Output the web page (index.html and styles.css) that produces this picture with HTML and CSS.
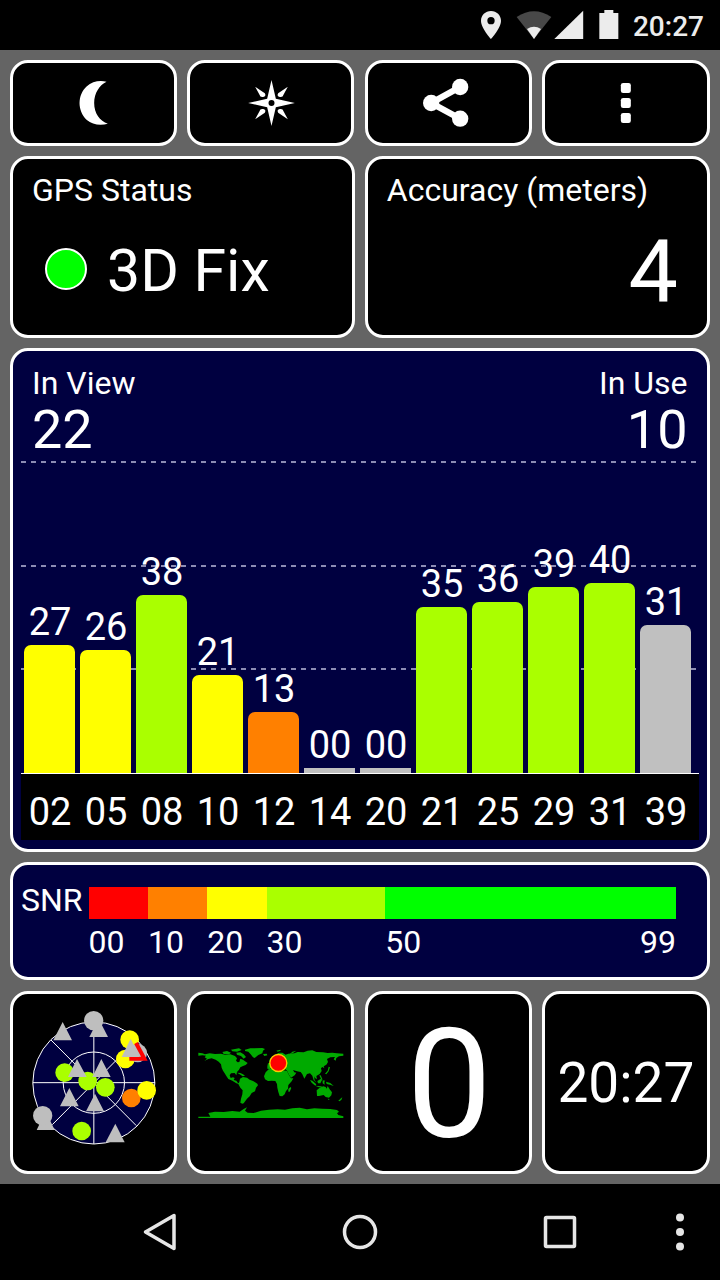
FILE: index.html
```
<!DOCTYPE html>
<html lang="en">
<head>
  <meta charset="UTF-8" />
  <meta name="viewport" content="width=device-width, initial-scale=1.0" />
  <title>GPS Test</title>
  <link rel="stylesheet" href="styles.css">
</head>
<body>
  <header class="status-bar">
    <svg class="status-pin" width="22" height="30" viewBox="60 30 66 90" aria-hidden="true">
      <path fill-rule="evenodd" d="M93 33c-17 0-30 13-30 29 0 22 30 55 30 55s30-33 30-55c0-16-13-29-30-29zm0 18a11 11 0 1 1 0 22 11 11 0 0 1 0-22z"/>
    </svg>
    <svg class="status-wifi" width="36" height="30" viewBox="168 30 108 90" aria-hidden="true">
      <path class="dim" d="M170 51q52-34 104 0l-52 66z"/>
      <path d="M201 87q21-14 42 0l-21 30z"/>
    </svg>
    <svg class="status-signal" width="30" height="30" viewBox="283 30 90 90" aria-hidden="true">
      <path d="M284 117h86.500V32z"/>
    </svg>
    <svg class="status-battery" width="20" height="30" viewBox="419 30 60 90" aria-hidden="true">
      <path d="M420 39h15v-9h27v9h15v78h-57z"/>
    </svg>
    <span class="status-time">20:27</span>
  </header>

  <main class="dashboard">
    <button class="panel tool" aria-label="Night mode">
      <svg width="60" height="60" viewBox="190.500 69 180 180">
        <path d="M318 95c-22-5-44 0-59 14-29 26-29 74 0 101 16 14 41 18 63 11-24-8-41-31-41-62 0-30 16-54 37-64z"/>
      </svg>
    </button>
    <button class="panel tool" aria-label="Compass">
      <svg width="60" height="60" viewBox="721.500 69 180 180">
        <path fill-rule="evenodd" d="M813 90l13 56 57 13-57 13-13 56-13-56-57-13 57-13zm0 60a9 9 0 1 0 0 18 9 9 0 0 0 0-18z"/>
        <path d="M764 110l29 20q5 9-5 11-9 2-11-7zM862 110l-29 20q-5 9 5 11 9 2 11-7zM764 208l29-20q5-9-5-11-9-2-11 7zM862 208l-29-20q-5-9 5-11 9-2 11 7z"/>
      </svg>
    </button>
    <button class="panel tool" aria-label="Share">
      <svg width="60" height="60" viewBox="173.500 69 180 180">
        <path class="share-line" d="M300 111l-87 48 87 47"/>
        <circle cx="300" cy="111" r="24.500"/>
        <circle cx="213" cy="159" r="24.500"/>
        <circle cx="300" cy="206" r="24.500"/>
      </svg>
    </button>
    <button class="panel tool" aria-label="Menu">
      <svg width="60" height="60" viewBox="708.500 69 180 180">
        <rect x="783" y="99" width="30" height="30" rx="7"/>
        <rect x="783" y="144" width="30" height="30" rx="7"/>
        <rect x="783" y="189" width="30" height="30" rx="7"/>
      </svg>
    </button>

    <section class="panel half">
      <h2 class="label">GPS Status</h2>
      <div class="fix"><span class="fix-light"></span>3D Fix</div>
    </section>
    <section class="panel half">
      <h2 class="label">Accuracy (meters)</h2>
      <div class="accuracy">4</div>
    </section>

    <section class="panel chart">
      <div class="chart-head">
        <div class="count">
          <h2 class="label">In View</h2>
          <div class="count-value">22</div>
        </div>
        <div class="count count-right">
          <h2 class="label">In Use</h2>
          <div class="count-value">10</div>
        </div>
      </div>
      <div class="bars">
        <div class="sat"><span>27</span><div class="bar yellow" style="height: 128px"></div></div>
        <div class="sat"><span>26</span><div class="bar yellow" style="height: 123px"></div></div>
        <div class="sat"><span>38</span><div class="bar lime" style="height: 178px"></div></div>
        <div class="sat"><span>21</span><div class="bar yellow" style="height: 98px"></div></div>
        <div class="sat"><span>13</span><div class="bar orange" style="height: 61px"></div></div>
        <div class="sat"><span>00</span><div class="bar empty"></div></div>
        <div class="sat"><span>00</span><div class="bar empty"></div></div>
        <div class="sat"><span>35</span><div class="bar lime" style="height: 166px"></div></div>
        <div class="sat"><span>36</span><div class="bar lime" style="height: 171px"></div></div>
        <div class="sat"><span>39</span><div class="bar lime" style="height: 186px"></div></div>
        <div class="sat"><span>40</span><div class="bar lime" style="height: 190px"></div></div>
        <div class="sat"><span>31</span><div class="bar gray" style="height: 148px"></div></div>
      </div>
      <div class="sat-ids">
        <span>02</span><span>05</span><span>08</span><span>10</span><span>12</span><span>14</span>
        <span>20</span><span>21</span><span>25</span><span>29</span><span>31</span><span>39</span>
      </div>
    </section>

    <section class="panel snr">
      <span class="snr-title">SNR</span>
      <div class="snr-scale">
        <div class="red"></div>
        <div class="orange"></div>
        <div class="yellow"></div>
        <div class="lime"></div>
        <div class="green"></div>
        <span>00</span>
        <span>10</span>
        <span>20</span>
        <span>30</span>
        <span class="snr-last"><span>50</span><span>99</span></span>
      </div>
    </section>

    <section class="panel tile" aria-label="Sky view">
      <svg class="sky" width="150" height="150" viewBox="26 23 450 450">
        <g class="sky-grid">
          <circle class="sky-disc" cx="250.500" cy="248" r="183"/>
          <circle cx="250.500" cy="247" r="92"/>
          <path d="M250.500 65v366M68 247h366M122 119l256 257M378 119L126 373"/>
        </g>
        <g class="sat-gray">
          <path d="M265 55l28 55h-56z"/>
          <circle cx="250" cy="61" r="29"/>
          <path d="M157 65l28 55h-56zM106 333l27 56H79z"/>
          <circle cx="97" cy="346" r="29"/>
          <path d="M315 370l28 56h-57z"/>
        </g>
        <circle class="sat-lime" cx="163" cy="217" r="28"/>
        <circle class="sat-lime" cx="232" cy="242" r="28"/>
        <circle class="sat-lime" cx="285" cy="261" r="28"/>
        <circle class="sat-lime" cx="214" cy="392" r="28"/>
        <g class="sat-gray">
          <path d="M200 176l29 54h-56zM273 176l28 54h-55zM177 263l28 55h-56zM254 280l27 53h-54z"/>
        </g>
        <circle class="sat-orange" cx="363" cy="293" r="28"/>
        <circle class="sat-yellow" cx="409" cy="270" r="28"/>
        <circle class="sat-yellow" cx="358" cy="118" r="28"/>
        <circle class="sat-yellow" cx="345" cy="176" r="28"/>
        <circle class="sat-gray" cx="382" cy="158" r="28"/>
        <path class="heading" d="M377 128L402 175H357"/>
        <path class="sat-gray" d="M361 115l27 55h-54z"/>
      </svg>
    </section>
    <section class="panel tile" aria-label="World map">
      <svg class="world" width="150" height="100" viewBox="17 39 450 300">
        <!-- North America -->
        <path d="M24 98L36 100 44 103 58 100 74 102 92 101 104 104 120 103 134 108 140 115 137 122 142 127 147 126 150 116 158 119 164 124 172 129 166 135 158 138 150 142 146 149 140 156 138 166 133 159 122 160 118 166 121 174 128 172 133 174 130 180 138 182 143 189 151 190 148 193 138 190 126 182 114 177 108 168 103 160 98 152 94 143 92 133 85 125 76 119 64 115 54 117 42 123 50 116 43 112 47 107 36 106 24 107z"/>
        <!-- Arctic islands and Greenland -->
        <path d="M96 96L110 93 122 98 116 103 100 102zM122 89L146 85 154 90 140 95 126 94zM138 98L150 97 160 103 167 111 160 116 152 108 140 104zM164 89L180 85 216 84 224 87 218 92 216 100 204 105 193 114 188 112 181 103 174 95 164 93zM218 102L229 101 231 106 222 108zM140 158L150 159 158 163 164 167 157 169 148 163z"/>
        <!-- South America -->
        <path d="M149 176L158 171 170 173 178 179 188 183 201 191 203 196 197 203 194 214 184 219 178 229 170 236 165 243 160 250 156 251 150 248 152 236 156 223 157 211 150 203 144 192 147 185z"/>
        <!-- Europe and Asia -->
        <path d="M231 139L233 130 240 128 237 124 246 119 252 114 249 108 258 102 267 98 276 98 286 104 294 101 312 100 322 96 340 97 352 92 366 91 378 96 398 97 412 99 426 98 440 100 459 101 459 107 446 109 438 114 436 122 430 118 434 111 420 112 410 117 413 126 408 134 400 139 402 145 396 141 392 145 394 153 388 162 378 168 380 178 374 174 371 169 373 181 379 188 370 181 366 167 359 160 350 162 342 176 336 163 331 156 320 154 308 150 312 157 318 158 313 166 302 173 296 164 290 152 284 147 276 148 268 142 262 138 252 139 247 144 238 147 231 146z"/>
        <!-- Africa -->
        <path d="M235 148L252 145 262 146 268 151 280 151 290 153 296 165 302 175 309 175 304 184 294 195 293 206 287 213 283 223 276 229 268 228 264 216 261 203 260 192 255 183 244 182 233 183 224 178 221 169 226 157z"/>
        <!-- islands, Oceania -->
        <path d="M300 201L303 204 298 215 294 215 294 207zM237 120L241 113 245 119 241 126 236 125zM404 161L412 152 415 140 419 142 415 154 408 163zM359 180L366 182 378 193 375 197 364 188zM374 197L392 199 398 202 386 202zM381 183L392 176 395 180 390 190 383 190zM397 181L405 182 402 185 403 194 397 190zM387 166L391 166 397 179 392 177zM407 185L420 189 430 198 419 194 409 192z"/>
        <path d="M379 211L388 203 399 199 406 201 409 206 412 198 418 208 425 217 423 226 416 233 406 231 400 225 386 228 380 228zM412 236L418 237 415 240zM444 242L452 235 456 232 453 240 447 244zM258 92L270 89 271 92 262 95zM298 103L306 95 318 92 308 99z"/>
        <!-- Antarctica -->
        <path d="M24 290L60 290 54 279 74 275 100 276 126 273 148 275 160 267 170 262 164 272 172 278 190 279 212 272 236 269 262 268 284 269 306 265 328 263 350 268 372 265 396 266 420 267 440 270 446 275 440 280 444 285 459 289 459 294 24 294z"/>
        <circle class="here" cx="264" cy="129" r="25.500"/>
      </svg>
    </section>
    <section class="panel tile speed">0</section>
    <section class="panel tile clock">20:27</section>
  </main>

  <nav class="nav-bar">
    <svg width="40" height="40" viewBox="0 0 40 40"><path d="M5.500 20L34 3.500v33z"/></svg>
    <svg width="40" height="40" viewBox="0 0 40 40"><circle cx="20" cy="20" r="15.500"/></svg>
    <svg width="40" height="40" viewBox="0 0 40 40"><rect x="5.500" y="5.500" width="29" height="29" rx="1"/></svg>
    <svg class="nav-more" width="40" height="40" viewBox="0 0 40 40">
      <circle cx="20" cy="5.500" r="4"/><circle cx="20" cy="20" r="4"/><circle cx="20" cy="34.500" r="4"/>
    </svg>
  </nav>
</body>
</html>
```
FILE: styles.css
```
:root {
  --red: #ff0000;
  --orange: #ff8000;
  --yellow: #ffff00;
  --lime: #aaff00;
  --green: #00ff00;
  --gray: #c0c0c0;
  --navy: #000040;
  --grid-line: #8c8cb4;
}

* {
  box-sizing: border-box;
}

body {
  margin: 0;
  width: 720px;
  height: 1280px;
  background: #000;
  color: #fff;
  font-family: Roboto, sans-serif;
  line-height: 1;
  overflow: hidden;
}

svg {
  display: block;
  flex-shrink: 0;
}

h2 {
  margin: 0;
  font-weight: 400;
}

.status-bar {
  height: 50px;
  padding: 10px 16px 0 0;
  display: flex;
  justify-content: flex-end;
  fill: #ececec;
}

.status-wifi {
  margin-left: 14px;
}

.status-wifi .dim {
  fill: #484848;
}

.status-signal {
  margin-left: 2px;
}

.status-battery {
  margin-left: 15px;
}

.status-time {
  margin: 3px 0 0 14px;
  font-size: 28px;
  font-weight: 500;
  color: #ececec;
}

.dashboard {
  height: 1134px;
  padding: 10px;
  background: #646464;
  display: grid;
  grid-template-columns: 167px 167px 167px 167.400px;
  grid-template-rows: 86px 182px 504px 119px 183px;
  gap: 10px 10.400px;
}

.panel {
  min-width: 0;
  background: #000;
  border: 3px solid #fff;
  border-radius: 18px;
}

.tool {
  padding: 0;
  display: flex;
  align-items: center;
  justify-content: center;
  fill: #fff;
}

.share-line {
  fill: none;
  stroke: #fff;
  stroke-width: 19;
}

.half {
  grid-column: span 2;
  margin-right: -0.400px;
  padding: 15px 29px 0 19px;
}

.label {
  font-size: 32px;
  line-height: 32px;
}

.fix {
  margin-top: 35px;
  padding-left: 13px;
  display: flex;
  gap: 20px;
  font-size: 59px;
}

.fix-light {
  width: 42px;
  height: 42px;
  margin-top: 7px;
  border: 2px solid #fff;
  border-radius: 50%;
  background: var(--green);
}

.accuracy {
  margin-top: 21px;
  font-size: 88px;
  text-align: right;
}

.chart,
.snr {
  grid-column: 1 / -1;
  background: var(--navy);
}

.chart {
  padding: 0 8px;
}

.chart-head {
  height: 110px;
  padding: 16px 11px 0;
  display: flex;
  justify-content: space-between;
}

.count-value {
  margin-top: 4px;
  font-size: 54px;
}

.count-right {
  text-align: right;
}

/* three dashed grid lines, the white axis is the bottom border */
.bars {
  height: 313px;
  padding-left: 3px;
  display: flex;
  align-items: flex-end;
  gap: 5px;
  border-bottom: 1px solid #fff;
  background-image:
    repeating-linear-gradient(90deg, var(--grid-line) 0 5px, transparent 5px 10px),
    repeating-linear-gradient(90deg, var(--grid-line) 0 5px, transparent 5px 10px),
    repeating-linear-gradient(90deg, var(--grid-line) 0 5px, transparent 5px 10px);
  background-size: 100% 2px;
  background-position: 0 0, 0 104px, 0 207px;
  background-repeat: no-repeat;
}

.sat {
  width: 51px;
  font-size: 38px;
  text-align: center;
}

.sat span {
  display: block;
  margin: 0 -2px 4px -1px;
}

.bar {
  border-radius: 7px 7px 0 0;
}

.red { background: var(--red); }
.orange { background: var(--orange); }
.yellow { background: var(--yellow); }
.lime { background: var(--lime); }
.green { background: var(--green); }
.gray { background: var(--gray); }

.bar.empty {
  height: 5px;
  border-radius: 0;
  background: var(--gray);
}

.sat-ids {
  height: 66px;
  padding: 19px 0 0 3.500px;
  display: flex;
  gap: 5px;
  background: #000;
  font-size: 38px;
}

.sat-ids span {
  width: 51px;
  text-align: center;
}

.snr {
  height: 118px;
  padding: 19px 30.600px 0 8px;
  display: flex;
  justify-content: space-between;
  font-size: 32px;
}

.snr-scale {
  width: 587.400px;
  padding-top: 3px;
  display: grid;
  grid-template-columns: 10fr 10fr 10fr 20fr 49fr;
  grid-template-rows: 32px 32px;
  row-gap: 7px;
}

.snr-last {
  display: flex;
  justify-content: space-between;
}

.tile {
  display: flex;
  align-items: center;
  justify-content: center;
}

.sky-grid {
  fill: none;
  stroke: #fff;
  stroke-width: 3;
}

.sky-disc {
  fill: var(--navy);
}

.sat-gray { fill: #bebebe; }
.sat-lime { fill: var(--lime); }
.sat-yellow { fill: var(--yellow); }
.sat-orange { fill: var(--orange); }

.heading {
  fill: none;
  stroke: var(--red);
  stroke-width: 12;
}

.world {
  fill: #00aa00;
}

.here {
  fill: var(--red);
  stroke: #ffc800;
  stroke-width: 4;
}

.speed {
  padding: 5px 0 0 2px;
  font-size: 152px;
}

.clock {
  padding-top: 2px;
  font-size: 55px;
}

.nav-bar {
  height: 96px;
  padding: 0 20px 0 60px;
  display: grid;
  grid-template-columns: repeat(3, 200px) 40px;
  align-items: center;
  justify-items: center;
  fill: none;
  stroke: #e6e6e6;
  stroke-width: 3.500;
  stroke-linejoin: round;
}

.nav-more {
  fill: #e6e6e6;
  stroke: none;
}
```
